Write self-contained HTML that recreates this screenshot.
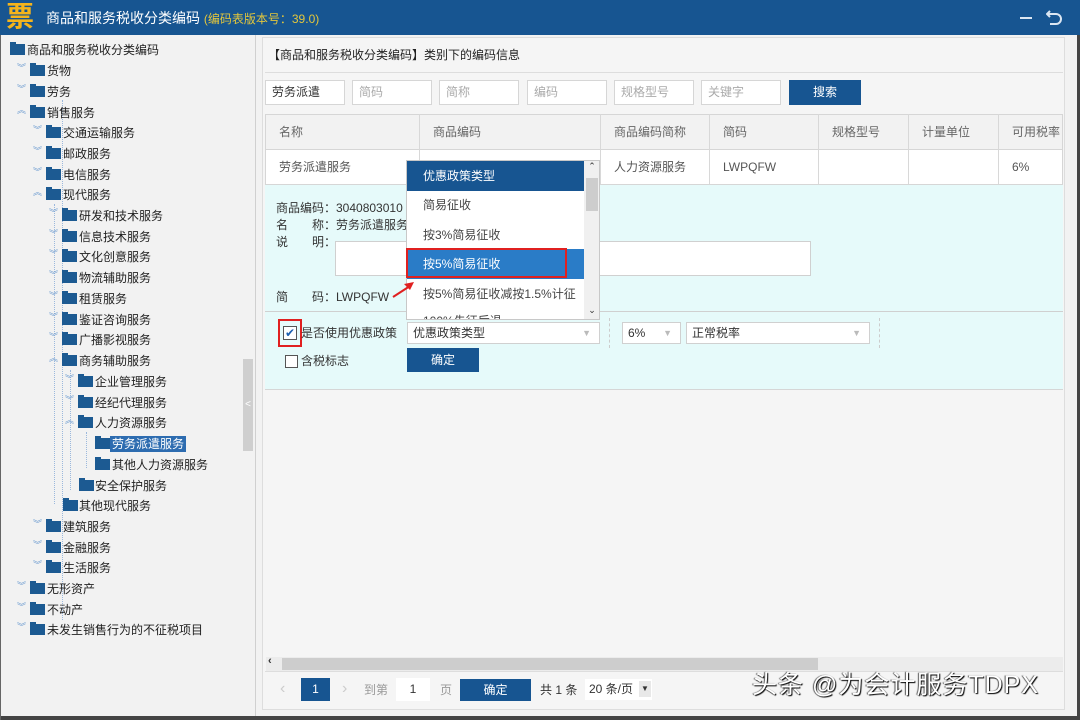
<!DOCTYPE html>
<html><head><meta charset="utf-8"><style>
*{margin:0;padding:0;box-sizing:border-box}
body{width:1080px;height:720px;overflow:hidden;background:#f2f2f2;font-family:"Liberation Sans","Noto Sans CJK SC",sans-serif;font-size:12px;color:#333;position:relative}
.a{position:absolute}
.t{position:absolute;height:20px;line-height:20px;white-space:nowrap;color:#222}
.f{position:absolute;width:15px;height:11px;background:#1c5a92;top:4px}
.f:before{content:"";position:absolute;left:0;top:-2px;width:6px;height:3px;background:#1c5a92}
.x{position:absolute;top:4px;width:10px;height:12px;color:#6c9bd0;font-size:9px;line-height:6px}
.in{position:absolute;background:#fff;border:1px solid #d6d6d6;height:25px;top:80px;line-height:23px;padding-left:6px;color:#aaa}
.th{position:absolute;top:115px;height:34px;line-height:34px;color:#666;padding-left:14px}
.td{position:absolute;top:150px;height:34px;line-height:34px;color:#555;padding-left:14px}
.vl{position:absolute;width:1px;background:#d8d8d8}
</style></head><body>
<div class="a" style="left:0;top:0;width:1080px;height:35px;background:#175591"></div>
<div class="a" style="left:6px;top:1px;font-size:28px;line-height:32px;color:#f5b41c;font-weight:bold">票</div>
<div class="a" style="left:46px;top:9px;font-size:14px;color:#fff;line-height:18px">商品和服务税收分类编码 <span style="color:#e3c63c;font-size:12px">(编码表版本号：39.0)</span></div>
<div class="a" style="left:1020px;top:17px;width:12px;height:2px;background:#dbe6f2"></div>
<svg class="a" style="left:1046px;top:8px" width="18" height="18"><path d="M4 3 L1 6 L4 9 M1 6 H10 A5 5 0 0 1 10 16 H4" fill="none" stroke="#dbe6f2" stroke-width="2"/></svg>
<div class="a" style="left:1077px;top:35px;width:3px;height:685px;background:#444"></div>
<div class="a" style="left:0;top:716px;width:1080px;height:4px;background:#444"></div>
<div class="a" style="left:0;top:35px;width:1px;height:685px;background:#666"></div>
<div class="a" style="left:255px;top:35px;width:1px;height:681px;background:#d0d0d0"></div>
<div class="a" style="left:243px;top:359px;width:10px;height:92px;background:#cfcfcf;color:#fff;font-size:10px;line-height:92px;text-align:center">&lt;</div>
<div class="a" style="left:62px;top:100px;width:1px;height:520px;border-left:1px dotted #9bb8dc"></div>
<div class="a" style="left:54px;top:204px;width:1px;height:300px;border-left:1px dotted #9bb8dc"></div>
<div class="a" style="left:70px;top:370px;width:1px;height:120px;border-left:1px dotted #9bb8dc"></div>
<div class="a" style="left:86px;top:432px;width:1px;height:36px;border-left:1px dotted #9bb8dc"></div>
<div class="t" style="left:10px;top:40px"><span class="f" style="left:0"></span><span style="margin-left:17px">商品和服务税收分类编码</span></div>
<div class="t" style="left:17px;top:61px"><span class="x" style="left:0">︾</span><span class="f" style="left:13px"></span><span style="margin-left:30px">货物</span></div>
<div class="t" style="left:17px;top:82px"><span class="x" style="left:0">︾</span><span class="f" style="left:13px"></span><span style="margin-left:30px">劳务</span></div>
<div class="t" style="left:17px;top:103px"><span class="x" style="left:0">︽</span><span class="f" style="left:13px"></span><span style="margin-left:30px">销售服务</span></div>
<div class="t" style="left:33px;top:123px"><span class="x" style="left:0">︾</span><span class="f" style="left:13px"></span><span style="margin-left:30px">交通运输服务</span></div>
<div class="t" style="left:33px;top:144px"><span class="x" style="left:0">︾</span><span class="f" style="left:13px"></span><span style="margin-left:30px">邮政服务</span></div>
<div class="t" style="left:33px;top:165px"><span class="x" style="left:0">︾</span><span class="f" style="left:13px"></span><span style="margin-left:30px">电信服务</span></div>
<div class="t" style="left:33px;top:185px"><span class="x" style="left:0">︽</span><span class="f" style="left:13px"></span><span style="margin-left:30px">现代服务</span></div>
<div class="t" style="left:49px;top:206px"><span class="x" style="left:0">︾</span><span class="f" style="left:13px"></span><span style="margin-left:30px">研发和技术服务</span></div>
<div class="t" style="left:49px;top:227px"><span class="x" style="left:0">︾</span><span class="f" style="left:13px"></span><span style="margin-left:30px">信息技术服务</span></div>
<div class="t" style="left:49px;top:247px"><span class="x" style="left:0">︾</span><span class="f" style="left:13px"></span><span style="margin-left:30px">文化创意服务</span></div>
<div class="t" style="left:49px;top:268px"><span class="x" style="left:0">︾</span><span class="f" style="left:13px"></span><span style="margin-left:30px">物流辅助服务</span></div>
<div class="t" style="left:49px;top:289px"><span class="x" style="left:0">︾</span><span class="f" style="left:13px"></span><span style="margin-left:30px">租赁服务</span></div>
<div class="t" style="left:49px;top:310px"><span class="x" style="left:0">︾</span><span class="f" style="left:13px"></span><span style="margin-left:30px">鉴证咨询服务</span></div>
<div class="t" style="left:49px;top:330px"><span class="x" style="left:0">︾</span><span class="f" style="left:13px"></span><span style="margin-left:30px">广播影视服务</span></div>
<div class="t" style="left:49px;top:351px"><span class="x" style="left:0">︽</span><span class="f" style="left:13px"></span><span style="margin-left:30px">商务辅助服务</span></div>
<div class="t" style="left:65px;top:372px"><span class="x" style="left:0">︾</span><span class="f" style="left:13px"></span><span style="margin-left:30px">企业管理服务</span></div>
<div class="t" style="left:65px;top:393px"><span class="x" style="left:0">︾</span><span class="f" style="left:13px"></span><span style="margin-left:30px">经纪代理服务</span></div>
<div class="t" style="left:65px;top:413px"><span class="x" style="left:0">︽</span><span class="f" style="left:13px"></span><span style="margin-left:30px">人力资源服务</span></div>
<div class="t" style="left:95px;top:434px"><span class="f" style="left:0"></span><span style="margin-left:15px;background:#2d6cb0;color:#fff;padding:1px 2px">劳务派遣服务</span></div>
<div class="t" style="left:95px;top:455px"><span class="f" style="left:0"></span><span style="margin-left:17px">其他人力资源服务</span></div>
<div class="t" style="left:79px;top:476px"><span class="f" style="left:0"></span><span style="margin-left:16px">安全保护服务</span></div>
<div class="t" style="left:63px;top:496px"><span class="f" style="left:0"></span><span style="margin-left:16px">其他现代服务</span></div>
<div class="t" style="left:33px;top:517px"><span class="x" style="left:0">︾</span><span class="f" style="left:13px"></span><span style="margin-left:30px">建筑服务</span></div>
<div class="t" style="left:33px;top:538px"><span class="x" style="left:0">︾</span><span class="f" style="left:13px"></span><span style="margin-left:30px">金融服务</span></div>
<div class="t" style="left:33px;top:558px"><span class="x" style="left:0">︾</span><span class="f" style="left:13px"></span><span style="margin-left:30px">生活服务</span></div>
<div class="t" style="left:17px;top:579px"><span class="x" style="left:0">︾</span><span class="f" style="left:13px"></span><span style="margin-left:30px">无形资产</span></div>
<div class="t" style="left:17px;top:600px"><span class="x" style="left:0">︾</span><span class="f" style="left:13px"></span><span style="margin-left:30px">不动产</span></div>
<div class="t" style="left:17px;top:620px"><span class="x" style="left:0">︾</span><span class="f" style="left:13px"></span><span style="margin-left:30px">未发生销售行为的不征税项目</span></div>
<div class="a" style="left:262px;top:37px;width:803px;height:673px;border:1px solid #ddd;background:#f5f5f5"></div>
<div class="a" style="left:268px;top:47px;line-height:16px;color:#222">【商品和服务税收分类编码】类别下的编码信息</div>
<div class="a" style="left:265px;top:72px;width:798px;height:1px;background:#ddd"></div>
<div class="in" style="left:265px;width:80px;color:#333">劳务派遣</div>
<div class="in" style="left:352px;width:80px">简码</div>
<div class="in" style="left:439px;width:80px">简称</div>
<div class="in" style="left:527px;width:80px">编码</div>
<div class="in" style="left:614px;width:80px">规格型号</div>
<div class="in" style="left:701px;width:80px">关键字</div>
<div class="a" style="left:789px;top:80px;width:72px;height:25px;background:#175591;color:#fff;text-align:center;line-height:25px">搜索</div>
<div class="a" style="left:265px;top:114px;width:798px;height:36px;background:#f2f2f2;border:1px solid #d6d6d6"></div>
<div class="a" style="left:265px;top:149px;width:798px;height:36px;background:#fff;border:1px solid #d6d6d6"></div>
<div class="vl" style="left:419px;top:114px;height:70px"></div><div class="vl" style="left:600px;top:114px;height:70px"></div><div class="vl" style="left:709px;top:114px;height:70px"></div><div class="vl" style="left:818px;top:114px;height:70px"></div><div class="vl" style="left:908px;top:114px;height:70px"></div><div class="vl" style="left:998px;top:114px;height:70px"></div>
<div class="th" style="left:265px">名称</div><div class="th" style="left:419px">商品编码</div><div class="th" style="left:600px">商品编码简称</div><div class="th" style="left:709px">简码</div><div class="th" style="left:818px">规格型号</div><div class="th" style="left:908px">计量单位</div><div class="th" style="left:998px">可用税率</div>
<div class="td" style="left:265px">劳务派遣服务</div><div class="td" style="left:600px">人力资源服务</div><div class="td" style="left:709px">LWPQFW</div><div class="td" style="left:998px">6%</div>
<div class="a" style="left:265px;top:185px;width:798px;height:205px;background:#e6fafa;border-bottom:1px solid #d6d6d6"></div>
<div class="a" style="left:276px;top:200px;line-height:17px;color:#333">商品编码：3040803010<br>名　　称：劳务派遣服务<br>说　　明：</div>
<div class="a" style="left:335px;top:241px;width:476px;height:35px;background:#fff;border:1px solid #d0d0d0"></div>
<div class="a" style="left:276px;top:289px;line-height:17px;color:#333">简　　码：LWPQFW</div>
<div class="a" style="left:265px;top:311px;width:798px;height:1px;background:#d0d0d0"></div>
<div class="a" style="left:278px;top:319px;width:24px;height:28px;border:2px solid #e02020"></div>
<div class="a" style="left:283px;top:326px;width:14px;height:14px;border:1px solid #555;background:#fff;color:#1c5fb0;font-size:12px;line-height:12px;text-align:center">✔</div>
<div class="a" style="left:301px;top:325px;line-height:16px">是否使用优惠政策</div>
<div class="a" style="left:407px;top:322px;width:193px;height:22px;background:#fff;border:1px solid #d0d0d0;line-height:20px;padding-left:5px">优惠政策类型<span style="position:absolute;right:8px;color:#bbb;font-size:9px">▼</span></div>
<div class="a" style="left:622px;top:322px;width:59px;height:22px;background:#fff;border:1px solid #d0d0d0;line-height:20px;padding-left:5px">6%<span style="position:absolute;right:8px;color:#bbb;font-size:9px">▼</span></div>
<div class="a" style="left:686px;top:322px;width:184px;height:22px;background:#fff;border:1px solid #d0d0d0;line-height:20px;padding-left:5px">正常税率<span style="position:absolute;right:8px;color:#bbb;font-size:9px">▼</span></div>
<div class="a" style="left:609px;top:318px;width:1px;height:30px;border-left:1px dashed #ccc"></div>
<div class="a" style="left:879px;top:318px;width:1px;height:30px;border-left:1px dashed #ccc"></div>
<div class="a" style="left:285px;top:355px;width:13px;height:13px;border:1px solid #555;background:#fff"></div>
<div class="a" style="left:301px;top:353px;line-height:16px">含税标志</div>
<div class="a" style="left:407px;top:348px;width:72px;height:24px;background:#175591;color:#fff;text-align:center;line-height:24px">确定</div>
<div class="a" style="left:406px;top:160px;width:194px;height:160px;background:#fff;border:1px solid #c8c8c8;overflow:hidden">
<div class="a" style="left:0;top:0;width:177px;height:30px;background:#175591;color:#fff;line-height:30px;padding-left:16px">优惠政策类型</div>
<div class="a" style="left:16px;top:36px;line-height:17px;color:#444">简易征收</div>
<div class="a" style="left:16px;top:66px;line-height:17px;color:#444">按3%简易征收</div>
<div class="a" style="left:0;top:88px;width:177px;height:30px;background:#2a7cc7"></div>
<div class="a" style="left:16px;top:95px;line-height:17px;color:#fff">按5%简易征收</div>
<div class="a" style="left:16px;top:125px;line-height:17px;color:#444">按5%简易征收减按1.5%计征</div>
<div class="a" style="left:16px;top:152px;line-height:17px;color:#444">100%先征后退</div>
<div class="a" style="left:177px;top:0;width:16px;height:160px;background:#f0f0f0;font-size:9px;text-align:center;color:#333">⌃</div>
<div class="a" style="left:179px;top:17px;width:12px;height:33px;background:#cdcdcd"></div>
<div class="a" style="left:177px;top:144px;width:16px;font-size:9px;text-align:center;color:#333">⌄</div>
</div>
<div class="a" style="left:406px;top:248px;width:161px;height:30px;border:2px solid #e02020"></div>
<svg class="a" style="left:390px;top:278px" width="30" height="22"><path d="M3 19 L20 8" stroke="#e02020" stroke-width="2"/><path d="M24 4 L14 6 L20 12 Z" fill="#e02020"/></svg>
<div class="a" style="left:266px;top:657px;width:797px;height:14px;background:#ececec"></div>
<div class="a" style="left:282px;top:658px;width:536px;height:12px;background:#cdcdcd"></div>
<div class="a" style="left:268px;top:655px;font-size:11px;font-weight:bold;color:#333">‹</div>
<div class="a" style="left:265px;top:671px;width:798px;height:1px;background:#ddd"></div>
<div class="a" style="left:280px;top:680px;color:#ccc;font-size:16px">‹</div>
<div class="a" style="left:301px;top:678px;width:29px;height:23px;background:#175591;color:#fff;text-align:center;line-height:23px">1</div>
<div class="a" style="left:342px;top:680px;color:#ccc;font-size:16px">›</div>
<div class="a" style="left:364px;top:682px;color:#999;line-height:16px">到第</div>
<div class="a" style="left:396px;top:678px;width:34px;height:23px;background:#fff;text-align:center;line-height:23px;color:#333">1</div>
<div class="a" style="left:440px;top:682px;color:#999;line-height:16px">页</div>
<div class="a" style="left:460px;top:679px;width:71px;height:22px;background:#175591;color:#fff;text-align:center;line-height:22px">确定</div>
<div class="a" style="left:540px;top:682px;line-height:16px">共 1 条</div>
<div class="a" style="left:585px;top:679px;width:67px;height:21px;background:#fff;line-height:21px;padding-left:4px">20 条/页<span style="position:absolute;right:1px;top:2px;width:12px;height:16px;background:#e8e8e8;font-size:8px;text-align:center;line-height:16px">▼</span></div>
<div class="a" style="left:752px;top:669px;font-size:25px;letter-spacing:1px;line-height:32px;color:#fff;text-shadow:1px 1px 1px #000,-1px 0 1px #555;white-space:nowrap">头条 @为会计服务TDPX</div>
</body></html>
